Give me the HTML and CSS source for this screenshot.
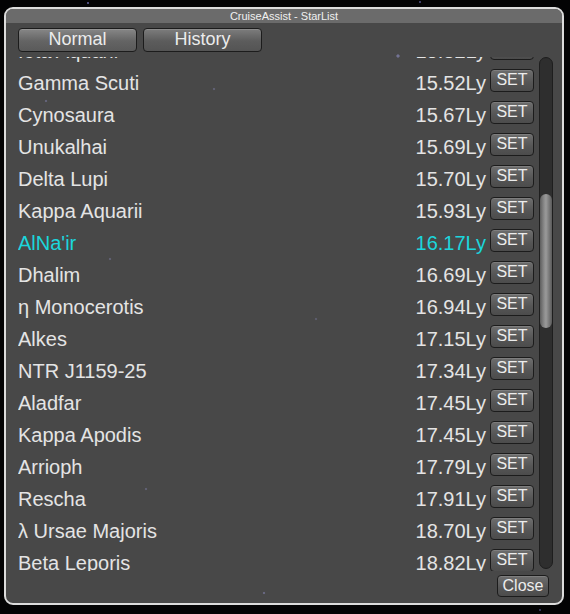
FILE: index.html
```html
<!DOCTYPE html>
<html>
<head>
<meta charset="utf-8">
<link rel="stylesheet" href="styles.css">
</head>
<body>
<div class="window">
  <div class="titlebar">CruiseAssist - StarList</div>
  <div class="tabs">
    <div class="tab tab-active">Normal</div>
    <div class="tab">History</div>
  </div>
  <div class="main">
    <div class="viewport">
      <div class="list">
        <div class="row"><span class="name">Iota Aquarii</span><span class="dist">15.32Ly</span><span class="set">SET</span></div>
        <div class="row"><span class="name">Gamma Scuti</span><span class="dist">15.52Ly</span><span class="set">SET</span></div>
        <div class="row"><span class="name">Cynosaura</span><span class="dist">15.67Ly</span><span class="set">SET</span></div>
        <div class="row"><span class="name">Unukalhai</span><span class="dist">15.69Ly</span><span class="set">SET</span></div>
        <div class="row"><span class="name">Delta Lupi</span><span class="dist">15.70Ly</span><span class="set">SET</span></div>
        <div class="row"><span class="name">Kappa Aquarii</span><span class="dist">15.93Ly</span><span class="set">SET</span></div>
        <div class="row row-current"><span class="name">AlNa'ir</span><span class="dist">16.17Ly</span><span class="set">SET</span></div>
        <div class="row"><span class="name">Dhalim</span><span class="dist">16.69Ly</span><span class="set">SET</span></div>
        <div class="row"><span class="name">η Monocerotis</span><span class="dist">16.94Ly</span><span class="set">SET</span></div>
        <div class="row"><span class="name">Alkes</span><span class="dist">17.15Ly</span><span class="set">SET</span></div>
        <div class="row"><span class="name">NTR J1159-25</span><span class="dist">17.34Ly</span><span class="set">SET</span></div>
        <div class="row"><span class="name">Aladfar</span><span class="dist">17.45Ly</span><span class="set">SET</span></div>
        <div class="row"><span class="name">Kappa Apodis</span><span class="dist">17.45Ly</span><span class="set">SET</span></div>
        <div class="row"><span class="name">Arrioph</span><span class="dist">17.79Ly</span><span class="set">SET</span></div>
        <div class="row"><span class="name">Rescha</span><span class="dist">17.91Ly</span><span class="set">SET</span></div>
        <div class="row"><span class="name">λ Ursae Majoris</span><span class="dist">18.70Ly</span><span class="set">SET</span></div>
        <div class="row"><span class="name">Beta Leporis</span><span class="dist">18.82Ly</span><span class="set">SET</span></div>
      </div>
    </div>
    <div class="scrollbar"><div class="thumb"></div></div>
  </div>
  <div class="footer"><div class="close">Close</div></div>
</div>
</body>
</html>
```
FILE: styles.css
```css
html, body {
  margin: 0;
  padding: 0;
}
body {
  width: 570px;
  height: 614px;
  overflow: hidden;
  background-color: #030304;
  background-image:
    radial-gradient(circle at 88px 3px, rgba(120,120,200,0.6) 0 1px, transparent 1.5px),
    radial-gradient(circle at 420px 2px, rgba(120,120,200,0.5) 0 1px, transparent 1.5px),
    radial-gradient(circle at 540px 610px, rgba(120,120,200,0.4) 0 1px, transparent 1.5px);
  font-family: "Liberation Sans", Arial, sans-serif;
}
.window {
  margin: 7px 0 0 4px;
  width: 556px;
  height: 594px;
  border: 2px solid #dcdcdc;
  border-radius: 9px;
  overflow: hidden;
  display: flex;
  flex-direction: column;
  background-color: #484848;
  background-image:
    radial-gradient(circle at 392px 47px, rgba(150,150,210,0.55) 0 1.2px, transparent 2px),
    radial-gradient(circle at 66px 34px, rgba(150,150,210,0.45) 0 1px, transparent 1.6px),
    radial-gradient(circle at 40px 92px, rgba(150,150,210,0.35) 0 1px, transparent 1.6px),
    radial-gradient(circle at 140px 480px, rgba(150,150,210,0.3) 0 1px, transparent 1.6px),
    radial-gradient(circle at 104px 250px, rgba(150,150,210,0.3) 0 1px, transparent 1.6px),
    radial-gradient(circle at 258px 584px, rgba(150,150,210,0.4) 0 1px, transparent 1.6px),
    radial-gradient(circle at 208px 80px, rgba(150,150,210,0.3) 0 1px, transparent 1.6px),
    radial-gradient(circle at 310px 310px, rgba(150,150,210,0.25) 0 1px, transparent 1.6px);
}
.titlebar {
  height: 14px;
  flex: none;
  background: #6b6b6b;
  color: #f0f0f0;
  font-size: 11px;
  line-height: 14px;
  text-align: center;
}
.tabs {
  flex: none;
  display: flex;
  gap: 6px;
  margin: 5px 0 0 12px;
  height: 24px;
}
.tab {
  width: 117px;
  height: 22px;
  border: 1px solid #1c1c1c;
  border-radius: 4px;
  background: linear-gradient(#7d7d7d, #5c5c5c 55%, #545454);
  box-shadow: inset 0 1px 0 rgba(255,255,255,0.12);
  color: #ececec;
  font-size: 18px;
  line-height: 21px;
  text-align: center;
}
.tab-active {
  background: linear-gradient(#878787, #646464 55%, #5a5a5a);
}
.main {
  flex: none;
  display: flex;
  gap: 5px;
  margin: 5px 0 0 12px;
  height: 514px;
}
.viewport {
  width: 516px;
  height: 514px;
  overflow: hidden;
}
.list {
  margin-top: -22px;
}
.row {
  display: grid;
  grid-template-columns: 1fr auto 44px;
  column-gap: 4px;
  height: 32px;
  color: #e4e4e4;
  font-size: 20px;
  line-height: 32px;
}
.row-current {
  color: #1bd6dc;
}
.name {
  white-space: nowrap;
}
.dist {
  text-align: right;
}
.set {
  align-self: start;
  margin-top: 2px;
  height: 21px;
  border: 1px solid #1c1c1c;
  border-radius: 4px;
  background: linear-gradient(#6e6e6e, #555 60%, #4c4c4c);
  box-shadow: inset 0 1px 0 rgba(255,255,255,0.12);
  color: #ececec;
  font-size: 16px;
  line-height: 19px;
  text-align: center;
}
.scrollbar {
  width: 12px;
  height: 510px;
  margin-top: 0;
  border: 1px solid #1e1e1e;
  border-radius: 7px;
  background: #2e2e2e;
  display: flex;
  flex-direction: column;
}
.thumb {
  margin-top: 136px;
  height: 134px;
  width: 12px;
  border-radius: 6px;
  background: linear-gradient(90deg, #5e5e5e, #8c8c8c 35%, #9a9a9a 50%, #7a7a7a 75%, #5a5a5a);
}
.footer {
  flex: none;
  display: flex;
  justify-content: flex-end;
  margin: 4px 13px 0 0;
}
.close {
  width: 50px;
  height: 20px;
  border: 1px solid #1c1c1c;
  border-radius: 4px;
  background: linear-gradient(#6e6e6e, #555 60%, #4c4c4c);
  box-shadow: inset 0 1px 0 rgba(255,255,255,0.12);
  color: #ececec;
  font-size: 16px;
  line-height: 20px;
  text-align: center;
}
```
